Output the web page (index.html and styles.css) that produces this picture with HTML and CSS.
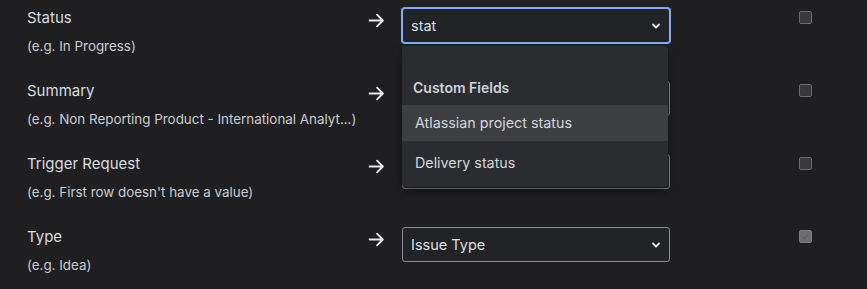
FILE: index.html
```html
<!DOCTYPE html>
<html lang="en">
<head>
    <meta charset="UTF-8">
    <title>Field mapping</title>
    <link rel="stylesheet" href="styles.css">
</head>
<body>
    <div class="mapping">
        <!-- Status: select is open -->
        <div class="map-row">
            <div class="field">
                <div class="field-name">Status</div>
                <div class="field-hint">(e.g. In Progress)</div>
            </div>
            <svg class="arrow" viewBox="0 0 16 16"><path d="M1.5 8h12.5M8.5 2.5L14 8l-5.5 5.5"/></svg>
            <div class="select-wrap">
                <div class="select focused">
                    <span>stat</span>
                    <svg class="chev" viewBox="0 0 10 10"><path d="M2 3.5l3 3 3-3"/></svg>
                </div>
                <div class="menu">
                    <div class="menu-group">Custom Fields</div>
                    <div class="menu-item active">Atlassian project status</div>
                    <div class="menu-item">Delivery status</div>
                </div>
            </div>
            <span class="check"></span>
        </div>

        <div class="map-row">
            <div class="field">
                <div class="field-name">Summary</div>
                <div class="field-hint">(e.g. Non Reporting Product - International Analyt...)</div>
            </div>
            <svg class="arrow" viewBox="0 0 16 16"><path d="M1.5 8h12.5M8.5 2.5L14 8l-5.5 5.5"/></svg>
            <div class="select-wrap">
                <div class="select">
                    <span></span>
                    <svg class="chev" viewBox="0 0 10 10"><path d="M2 3.5l3 3 3-3"/></svg>
                </div>
            </div>
            <span class="check"></span>
        </div>

        <div class="map-row">
            <div class="field">
                <div class="field-name">Trigger Request</div>
                <div class="field-hint">(e.g. First row doesn't have a value)</div>
            </div>
            <svg class="arrow" viewBox="0 0 16 16"><path d="M1.5 8h12.5M8.5 2.5L14 8l-5.5 5.5"/></svg>
            <div class="select-wrap">
                <div class="select">
                    <span></span>
                    <svg class="chev" viewBox="0 0 10 10"><path d="M2 3.5l3 3 3-3"/></svg>
                </div>
            </div>
            <span class="check"></span>
        </div>

        <div class="map-row">
            <div class="field">
                <div class="field-name">Type</div>
                <div class="field-hint">(e.g. Idea)</div>
            </div>
            <svg class="arrow" viewBox="0 0 16 16"><path d="M1.5 8h12.5M8.5 2.5L14 8l-5.5 5.5"/></svg>
            <div class="select-wrap">
                <div class="select">
                    <span>Issue Type</span>
                    <svg class="chev" viewBox="0 0 10 10"><path d="M2 3.5l3 3 3-3"/></svg>
                </div>
            </div>
            <span class="check checked disabled">
                <svg viewBox="0 0 12 12"><path d="M2.5 6.2l2.2 2.2 4.5-4.8"/></svg>
            </span>
        </div>
    </div>
</body>
</html>
```

FILE: styles.css
```css
* {
    margin: 0;
    padding: 0;
    box-sizing: border-box;
}

body {
    background: #1f1f22;
    color: #d6d9de;
    font-family: Inter, "Noto Sans", sans-serif;
    overflow: hidden;
}

.mapping {
    padding: 8px 0 0 27px;
}

.map-row {
    display: grid;
    grid-template-columns: 341px 34px 268px 1fr;
    align-items: start;
    height: 73px;
}

.field-name {
    font-size: 15px;
    line-height: 20px;
    color: #d8dbe0;
}

.field-hint {
    font-size: 13.4px;
    line-height: 18px;
    margin-top: 9px;
    color: #c9ccd1;
}

.arrow {
    width: 17px;
    height: 17px;
    margin-top: 4px;
    fill: none;
    stroke: #e6e9ed;
    stroke-width: 1.8;
    stroke-linecap: round;
    stroke-linejoin: round;
}

.select-wrap {
    position: relative;
}

.select {
    height: 35px;
    display: flex;
    align-items: center;
    justify-content: space-between;
    padding: 0 8px;
    background: #222327;
    border: 1px solid #8b8c90;
    border-radius: 3px;
    font-size: 14.5px;
    color: #dcdfe3;
}

.select.focused {
    border-color: #82adf2;
    box-shadow: 0 0 0 1px #82adf2;
}

.chev {
    width: 10px;
    height: 10px;
    fill: none;
    stroke: #e2e4e8;
    stroke-width: 1.8;
    stroke-linecap: round;
    stroke-linejoin: round;
}

.menu {
    position: absolute;
    top: 38px;
    left: 0;
    width: 266px;
    padding: 24px 0 6px;
    background: #2b2c30;
    border-radius: 3px;
    box-shadow: 0 4px 10px rgba(0, 0, 0, 0.45);
    z-index: 2;
}

.menu-group {
    height: 35px;
    line-height: 35px;
    padding-left: 11px;
    font-size: 14px;
    font-weight: 600;
    color: #cdd3dc;
}

.menu-item {
    height: 36px;
    line-height: 36px;
    padding-left: 13px;
    font-size: 14.3px;
    color: #d3d6db;
}

.menu-item + .menu-item {
    margin-top: 4px;
}

.menu-item.active {
    background: #3d3e42;
}

.check {
    width: 13px;
    height: 13px;
    margin: 3px 0 0 129px;
    border: 1px solid #6a6b6f;
    border-radius: 2px;
    background: #38393c;
    display: flex;
    align-items: center;
    justify-content: center;
}

.check.checked.disabled {
    background: #6c6d70;
    border-color: #7a7b7e;
}

.check svg {
    width: 11px;
    height: 11px;
    fill: none;
    stroke: #5d5e61;
    stroke-width: 1.5;
}
```
